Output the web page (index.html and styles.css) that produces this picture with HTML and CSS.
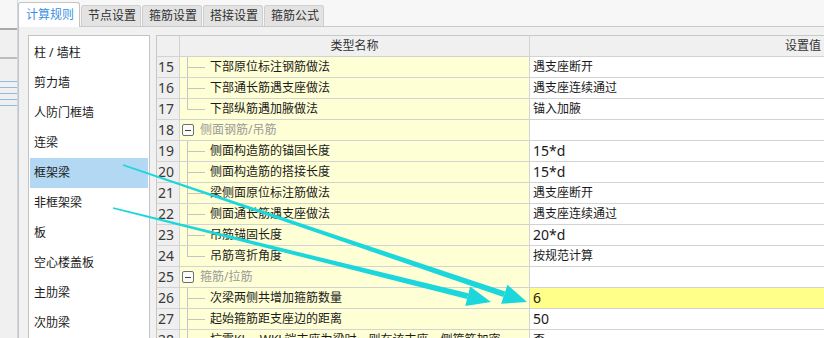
FILE: index.html
```html
<!DOCTYPE html>
<html lang="zh-CN">
<head>
<meta charset="utf-8">
<title>计算规则</title>
<link rel="stylesheet" href="styles.css">
</head>
<body>
<div class="app">
  <div class="backwin">
    <div class="bw-band bw-top"></div>
    <div class="bw-band bw-mid"></div>
    <div class="bw-lines">
      <i></i><i></i><i></i><i></i><i></i>
    </div>
  </div>
  <div class="main">
    <div class="tabs">
      <div class="tab active">计算规则</div>
      <div class="tab">节点设置</div>
      <div class="tab">箍筋设置</div>
      <div class="tab">搭接设置</div>
      <div class="tab">箍筋公式</div>
    </div>
    <div class="panel">
      <ul class="cats">
        <li>柱 / 墙柱</li>
        <li>剪力墙</li>
        <li>人防门框墙</li>
        <li>连梁</li>
        <li class="sel">框架梁</li>
        <li>非框架梁</li>
        <li>板</li>
        <li>空心楼盖板</li>
        <li>主肋梁</li>
        <li>次肋梁</li>
      </ul>
      <div class="grid">
        <div class="row head">
          <div class="c rn"></div>
          <div class="c nm hd">类型名称</div>
          <div class="c vl hd">设置值</div>
        </div>
        <div class="row">
          <div class="c rn">15</div>
          <div class="c nm"><span class="conn tee"></span><span class="tx">下部原位标注钢筋做法</span></div>
          <div class="c vl">遇支座断开</div>
        </div>
        <div class="row">
          <div class="c rn">16</div>
          <div class="c nm"><span class="conn tee"></span><span class="tx">下部通长筋遇支座做法</span></div>
          <div class="c vl">遇支座连续通过</div>
        </div>
        <div class="row">
          <div class="c rn">17</div>
          <div class="c nm"><span class="conn last"></span><span class="tx">下部纵筋遇加腋做法</span></div>
          <div class="c vl">锚入加腋</div>
        </div>
        <div class="row">
          <div class="c rn">18</div>
          <div class="c nm"><span class="box"></span><span class="gt">侧面钢筋/吊筋</span></div>
          <div class="c vl"></div>
        </div>
        <div class="row">
          <div class="c rn">19</div>
          <div class="c nm"><span class="conn tee"></span><span class="tx">侧面构造筋的锚固长度</span></div>
          <div class="c vl"><span class="num">15*d</span></div>
        </div>
        <div class="row">
          <div class="c rn">20</div>
          <div class="c nm"><span class="conn tee"></span><span class="tx">侧面构造筋的搭接长度</span></div>
          <div class="c vl"><span class="num">15*d</span></div>
        </div>
        <div class="row">
          <div class="c rn">21</div>
          <div class="c nm"><span class="conn tee"></span><span class="tx">梁侧面原位标注筋做法</span></div>
          <div class="c vl">遇支座断开</div>
        </div>
        <div class="row">
          <div class="c rn">22</div>
          <div class="c nm"><span class="conn tee"></span><span class="tx">侧面通长筋遇支座做法</span></div>
          <div class="c vl">遇支座连续通过</div>
        </div>
        <div class="row">
          <div class="c rn">23</div>
          <div class="c nm"><span class="conn tee"></span><span class="tx">吊筋锚固长度</span></div>
          <div class="c vl"><span class="num">20*d</span></div>
        </div>
        <div class="row">
          <div class="c rn">24</div>
          <div class="c nm"><span class="conn last"></span><span class="tx">吊筋弯折角度</span></div>
          <div class="c vl">按规范计算</div>
        </div>
        <div class="row">
          <div class="c rn">25</div>
          <div class="c nm"><span class="box"></span><span class="gt">箍筋/拉筋</span></div>
          <div class="c vl"></div>
        </div>
        <div class="row">
          <div class="c rn">26</div>
          <div class="c nm"><span class="conn tee"></span><span class="tx">次梁两侧共增加箍筋数量</span></div>
          <div class="c vl hl"><span class="num">6</span></div>
        </div>
        <div class="row">
          <div class="c rn">27</div>
          <div class="c nm"><span class="conn tee"></span><span class="tx">起始箍筋距支座边的距离</span></div>
          <div class="c vl"><span class="num">50</span></div>
        </div>
        <div class="row">
          <div class="c rn">28</div>
          <div class="c nm"><span class="conn tee"></span><span class="tx">抗震KL、WKL端支座为梁时，则在该支座一侧箍筋加密</span></div>
          <div class="c vl">否</div>
        </div>
      </div>
    </div>
  </div>
  <svg class="arrows" width="824" height="338" viewBox="0 0 824 338">
    <polygon points="122.7,165.8 123.3,164.2 505.3,291.5 503.3,297.1"/>
    <polygon points="501.1,303.8 527,302 507.5,284.8"/>
    <polygon points="112.8,208.8 113.2,207.2 468.4,293.3 467,299.1"/>
    <polygon points="465.3,305.9 491,302 470.1,286.5"/>
  </svg>
</div>
</body>
</html>
```

FILE: styles.css
```css
html, body {
  margin: 0;
  padding: 0;
}
body {
  width: 824px;
  height: 338px;
  overflow: hidden;
  background: #f0f0f0;
  font-family: "Noto Sans", "Noto Sans CJK SC", sans-serif;
  font-size: 12px;
  color: #1a1a1a;
}
.app {
  position: relative;
  display: flex;
  width: 824px;
  height: 338px;
  overflow: hidden;
}

/* background window strip on the far left */
.backwin {
  width: 17px;
  flex: none;
  background: #f0f0f0;
  border-right: 1px solid #cfd6e0;
  display: flex;
  flex-direction: column;
}
.bw-band {
  border-bottom: 2px solid #a9a9a9;
}
.bw-top {
  height: 28px;
  background: #f7f7f7;
}
.bw-mid {
  height: 27px;
  background: #f0f0f0;
  border-bottom-color: #bdbdbd;
}
.bw-lines {
  display: flex;
  flex-direction: column;
  gap: 5px;
  padding-top: 22px;
}
.bw-lines i {
  display: block;
  height: 1px;
  background: #8fbbe6;
}

/* main tab area */
.main {
  flex: 1;
  display: flex;
  flex-direction: column;
  min-width: 0;
}
.tabs {
  height: 26px;
  flex: none;
  display: flex;
  align-items: flex-end;
  border-bottom: 1px solid #c9c9c9;
  background: #f7f7f7;
}
.tab {
  width: 60px;
  height: 21px;
  margin-left: 1px;
  box-sizing: border-box;
  border: 1px solid #cfcfcf;
  border-bottom: none;
  border-radius: 3px 3px 0 0;
  background: #e3e3e3;
  color: #303030;
  line-height: 20px;
  padding-left: 6px;
  margin-bottom: 0;
}
.tab.active {
  width: 62px;
  height: 25px;
  margin-left: 0;
  background: #ffffff;
  color: #3d8fe3;
  line-height: 24px;
  padding-left: 7px;
  margin-bottom: -1px;
  border-color: #c4c4c4;
  position: relative;
}
.panel {
  flex: 1;
  display: flex;
  align-items: flex-start;
  border-left: 1px solid #c4c4c4;
  background: #f1f1f1;
  padding: 8px 0 0 9px;
  min-height: 0;
}

/* category list */
.cats {
  list-style: none;
  margin: 0;
  padding: 2px 1px 0;
  width: 118px;
  height: 320px;
  flex: none;
  background: #ffffff;
  border: 1px solid #c3c3c3;
}
.cats li {
  height: 30px;
  line-height: 30px;
  padding-left: 4px;
  color: #1a1a1a;
}
.cats li.sel {
  background: #b3d8f3;
}

/* property grid */
.grid {
  margin-left: 6px;
  flex: none;
  width: 920px;
  border-top: 1px solid #c8c8c8;
  border-left: 1px solid #c8c8c8;
  background: #ffffff;
}
.row {
  display: grid;
  grid-template-columns: 23px 350px 1fr;
  height: 21px;
  box-sizing: border-box;
  border-bottom: 1px solid #d3d3d3;
}
.c {
  border-right: 1px solid #d3d3d3;
  box-sizing: border-box;
  line-height: 20px;
  white-space: nowrap;
  overflow: hidden;
}
.rn {
  background: #efefef;
  font-size: 14px;
  color: #3a3a3a;
  padding-left: 1px;
}
.nm {
  background: #ffffd6;
  display: flex;
  align-items: stretch;
}
.vl {
  padding-left: 3px;
  background: #ffffff;
}
.vl.hl {
  background: #ffff8a;
}
.num {
  font-size: 14px;
}
.head .c {
  background: #f0f0f0;
  color: #333333;
}
.head .nm.hd {
  justify-content: center;
}
.head .vl.hd {
  text-align: center;
  padding-left: 0;
}

/* tree decorations */
.conn {
  width: 18px;
  margin-left: 7px;
  flex: none;
}
.conn.tee {
  background:
    linear-gradient(#c4c4c4, #c4c4c4) 0 0 / 1px 100% no-repeat,
    linear-gradient(#c4c4c4, #c4c4c4) 0 10px / 18px 1px no-repeat;
}
.conn.last {
  background:
    linear-gradient(#c4c4c4, #c4c4c4) 0 0 / 1px 11px no-repeat,
    linear-gradient(#c4c4c4, #c4c4c4) 0 10px / 18px 1px no-repeat;
}
.tx {
  margin-left: 5px;
}
.box {
  flex: none;
  align-self: center;
  width: 12px;
  height: 12px;
  box-sizing: border-box;
  margin-left: 2px;
  border: 1px solid #6f6f6f;
  border-radius: 2px;
  background:
    linear-gradient(#444, #444) center / 6px 1px no-repeat,
    #fbfbfb;
}
.gt {
  margin-left: 6px;
  color: #9a9a9a;
}

/* annotation arrows overlay */
.arrows {
  position: absolute;
  left: 0;
  top: 0;
  pointer-events: none;
}
.arrows polygon {
  fill: #1bd7db;
}
```
